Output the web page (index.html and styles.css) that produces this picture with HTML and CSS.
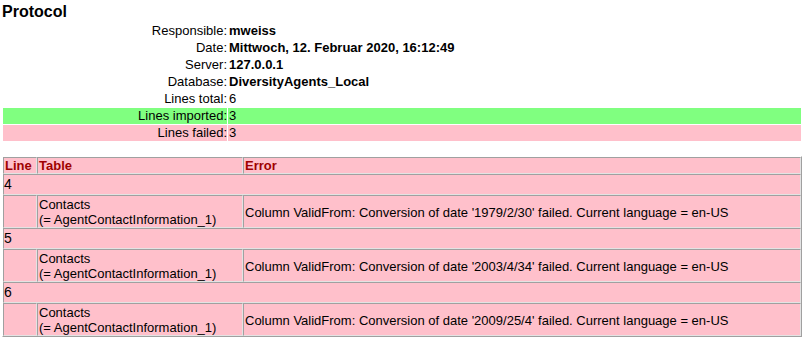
FILE: index.html
```html
<!DOCTYPE html>
<html>
<head>
<meta charset="utf-8">
<title>Protocol</title>
<link rel="stylesheet" href="styles.css">
</head>
<body>
<h1 class="title">Protocol</h1>
<div class="info">
  <div class="label">Responsible:</div><div class="value bold">mweiss</div>
  <div class="label">Date:</div><div class="value bold">Mittwoch, 12. Februar 2020, 16:12:49</div>
  <div class="label">Server:</div><div class="value bold">127.0.0.1</div>
  <div class="label">Database:</div><div class="value bold">DiversityAgents_Local</div>
  <div class="label">Lines total:</div><div class="value">6</div>
  <div class="label ok">Lines imported:</div><div class="value ok">3</div>
  <div class="label fail">Lines failed:</div><div class="value fail">3</div>
</div>
<table class="errors">
  <thead>
    <tr><th class="c-line">Line</th><th class="c-table">Table</th><th class="c-error">Error</th></tr>
  </thead>
  <tbody>
    <tr class="num"><td colspan="3">4</td></tr>
    <tr class="detail"><td></td><td>Contacts<br>(= AgentContactInformation_1)</td><td>Column ValidFrom: Conversion of date '1979/2/30' failed. Current language = en-US</td></tr>
    <tr class="num"><td colspan="3">5</td></tr>
    <tr class="detail"><td></td><td>Contacts<br>(= AgentContactInformation_1)</td><td>Column ValidFrom: Conversion of date '2003/4/34' failed. Current language = en-US</td></tr>
    <tr class="num"><td colspan="3">6</td></tr>
    <tr class="detail"><td></td><td>Contacts<br>(= AgentContactInformation_1)</td><td>Column ValidFrom: Conversion of date '2009/25/4' failed. Current language = en-US</td></tr>
  </tbody>
</table>
</body>
</html>
```
FILE: styles.css
```css
html, body {
  background: #ffffff;
}
body {
  margin: 0;
  padding: 0 4px 0 2px;
  font-family: "Liberation Sans", Arial, sans-serif;
  font-size: 13px;
  color: #000000;
}
.title {
  margin: 2px 0 1px 0;
  font-size: 16px;
  line-height: 20px;
  font-weight: bold;
}
.info {
  display: grid;
  grid-template-columns: 224px 1fr;
  grid-auto-rows: 16px;
  column-gap: 1px;
  row-gap: 1px;
  margin: 0 1px;
  line-height: 16px;
}
.label {
  text-align: right;
}
.value {
  padding-left: 1px;
}
.bold {
  font-weight: bold;
}
.ok {
  background: #80ff80;
}
.fail {
  background: #ffc0cb;
}
.errors {
  margin-top: 15px;
  width: 800px;
  table-layout: fixed;
  border-collapse: separate;
  border-spacing: 0;
  background: #ffc0cb;
  border: 1px solid;
  border-color: #ffffff #a0a0a0 #a0a0a0 #ffffff;
}
.errors th,
.errors td {
  box-sizing: border-box;
  border: 1px solid;
  border-color: #a0a0a0 #e3e3e3 #e3e3e3 #a0a0a0;
  text-align: left;
  vertical-align: middle;
  padding: 1px 1px 0 1px;
  line-height: 15px;
  font-weight: normal;
}
.errors th {
  padding: 0 1px 0 1px;
  font-weight: bold;
  color: #a00000;
}
.c-line { width: 34px; }
.c-table { width: 206px; }
.errors .num td {
  font-size: 14px;
  line-height: 17px;
  padding: 1px 1px 1px 0;
}
```
